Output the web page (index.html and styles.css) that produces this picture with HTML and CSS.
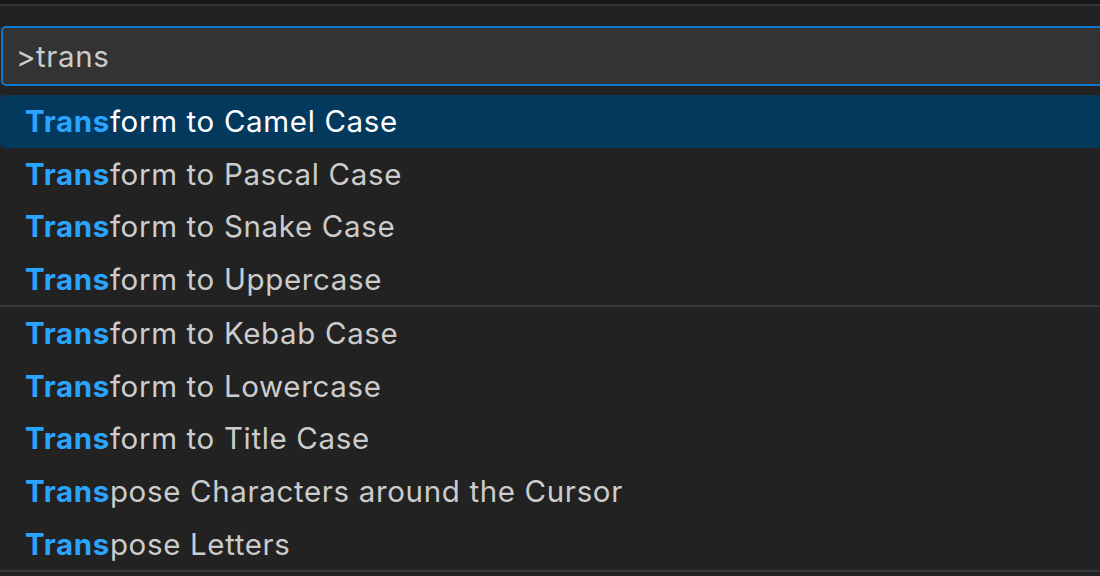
FILE: index.html
```html
<!DOCTYPE html>
<html lang="en">
<head>
    <meta charset="UTF-8">
    <title>Command Palette</title>
    <link rel="stylesheet" href="styles.css">
</head>
<body>
    <div class="topbar"></div>

    <div class="palette">
        <div class="input-box">
            <span class="input-text">&gt;trans</span>
        </div>

        <ul class="results">
            <li class="item selected"><b>Trans</b>form to Camel Case</li>
            <li class="item"><b>Trans</b>form to Pascal Case</li>
            <li class="item"><b>Trans</b>form to Snake Case</li>
            <li class="item"><b>Trans</b>form to Uppercase</li>
            <li class="item sep"><b>Trans</b>form to Kebab Case</li>
            <li class="item"><b>Trans</b>form to Lowercase</li>
            <li class="item"><b>Trans</b>form to Title Case</li>
            <li class="item"><b>Trans</b>pose Characters around the Cursor</li>
            <li class="item last"><b>Trans</b>pose Letters</li>
        </ul>
    </div>
</body>
</html>
```

FILE: styles.css
```css
body {
    margin: 0;
    background-color: #222222;
    font-family: Inter, "Noto Sans", sans-serif;
    overflow: hidden;
    height: 576px;
}

.topbar {
    height: 4px;
    background-color: #181818;
    border-bottom: 2px solid #343434;
}

.palette {
    padding-top: 20px;
    padding-left: 1px;
}

.input-box {
    height: 56px;
    margin-right: -10px;
    background-color: #333333;
    border: 2px solid #0a78d4;
    border-radius: 5px;
    display: flex;
    align-items: center;
    padding-left: 13px;
}

.input-text {
    color: #cccccc;
    font-size: 29.5px;
    letter-spacing: 0.6px;
}

.results {
    list-style: none;
    margin: 9px 0 0 -1px;
    padding: 0;
}

.item {
    height: 52.6px;
    display: flex;
    align-items: center;
    padding-left: 25px;
    color: #cccccc;
    font-size: 29.5px;
    letter-spacing: 0.65px;
    box-sizing: border-box;
}

.item b {
    color: #2aa4ff;
    font-weight: 700;
}

.item.selected {
    background-color: #04395e;
    color: #ffffff;
    border-radius: 5px 0 0 5px;
}

.item.sep {
    border-top: 2px solid #383838;
    height: 54px;
}

.item.last {
    border-bottom: 2px solid #383838;
    height: 55px;
}
```
